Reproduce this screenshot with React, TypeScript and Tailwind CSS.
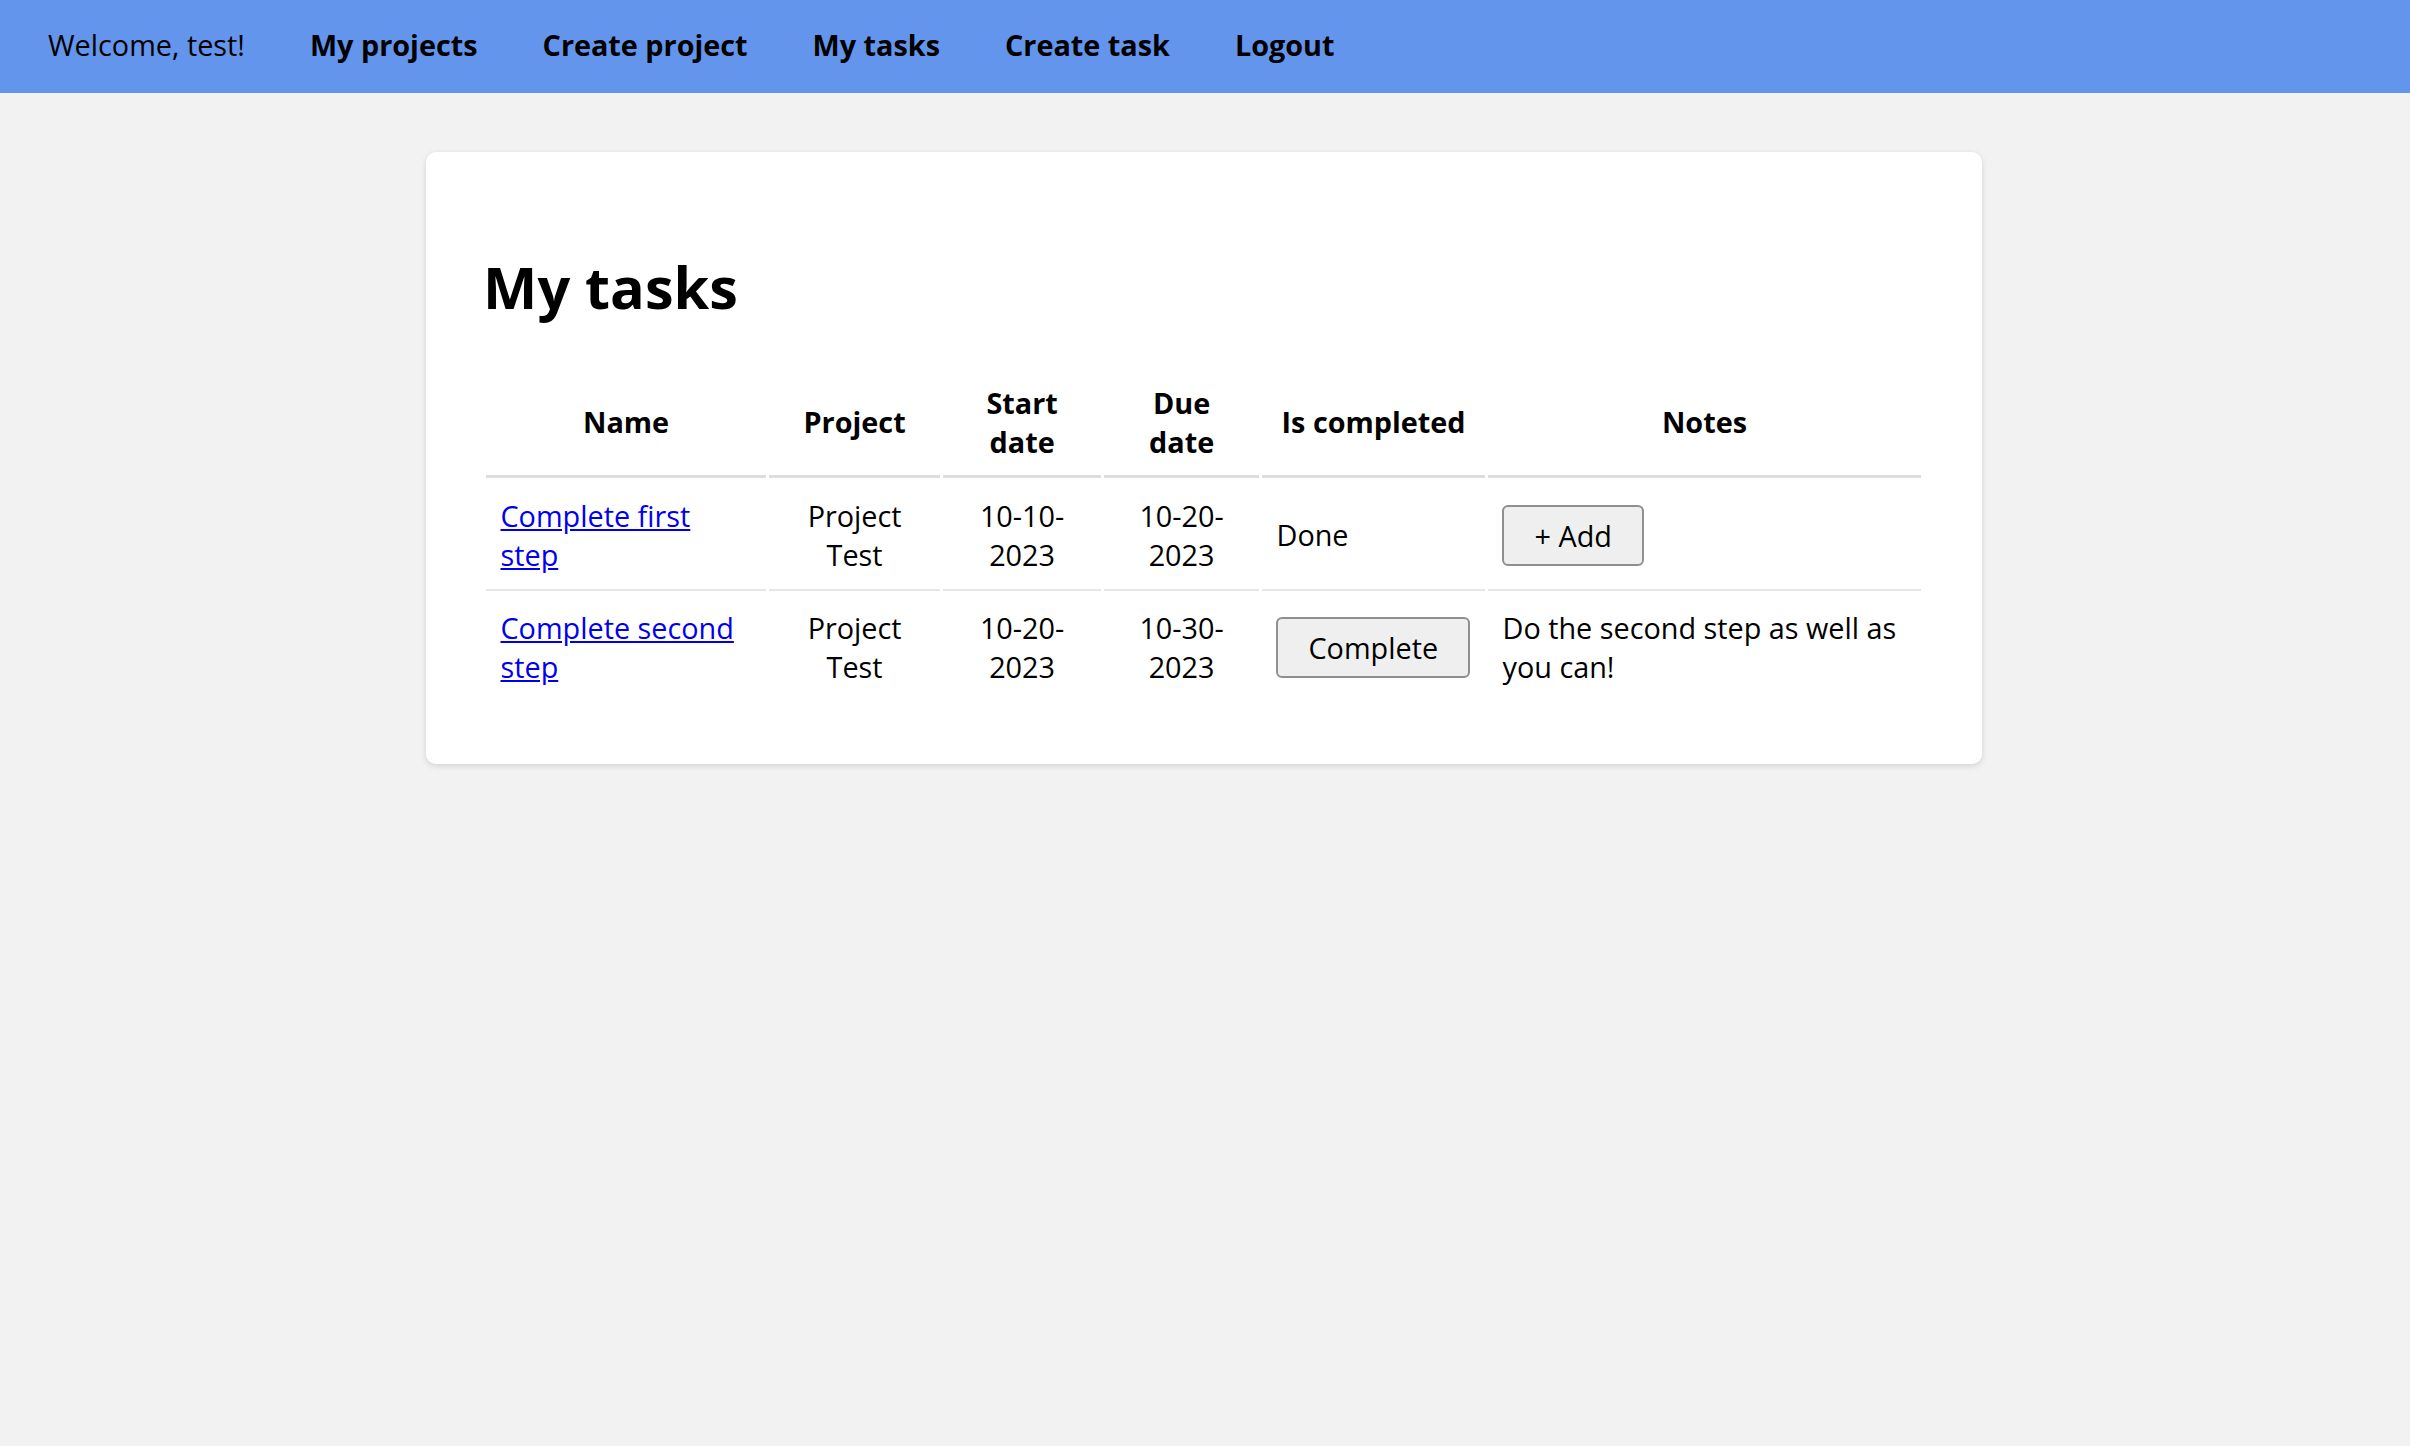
import React from 'react';

type Task = {
  name: string;
  project: string;
  start: string;
  due: string;
  done: boolean;
  notes: string;
};

const tasks: Task[] = [
  { name: 'Complete first step', project: 'Project Test', start: '10-10-2023', due: '10-20-2023', done: true, notes: '' },
  { name: 'Complete second step', project: 'Project Test', start: '10-20-2023', due: '10-30-2023', done: false, notes: 'Do the second step as well as you can!' },
];

const navLinks = ['My projects', 'Create project', 'My tasks', 'Create task', 'Logout'];

function NavBar() {
  return (
    <nav className="h-[93px] bg-[#6495ed] flex items-center gap-[65px] pl-[48px] pb-[3px]">
      <span>Welcome, test!</span>
      {navLinks.map((link) => (
        <a key={link} href="#" className="font-bold text-black no-underline">
          {link}
        </a>
      ))}
    </nav>
  );
}

function PlainButton({ children }: { children: React.ReactNode }) {
  return (
    <button className="bg-[#efefef] border-2 border-[#8f8f8f] rounded-[6px] px-[30px] py-[9px] leading-[39px] text-black">
      {children}
    </button>
  );
}

function TaskTable() {
  const th = 'font-bold text-center align-middle p-[14.4px] border-b-[3px] border-[#dddddd]';
  const td = 'align-middle p-[14.4px]';
  return (
    <table className="w-full table-fixed border-separate border-spacing-[3px]">
      <colgroup>
        <col className="w-[280px]" />
        <col className="w-[171px]" />
        <col className="w-[158px]" />
        <col className="w-[155px]" />
        <col className="w-[223px]" />
        <col />
      </colgroup>
      <thead>
        <tr>
          <th className={th}>Name</th>
          <th className={th}>Project</th>
          <th className={th}>Start date</th>
          <th className={th}>Due date</th>
          <th className={th}>Is completed</th>
          <th className={th}>Notes</th>
        </tr>
      </thead>
      <tbody>
        {tasks.map((task, i) => {
          const border = i < tasks.length - 1 ? ' border-b-2 border-[#e6e6e6]' : '';
          return (
            <tr key={task.name}>
              <td className={td + border}>
                <a href="#" className="text-[#0000ee] underline">
                  {task.name}
                </a>
              </td>
              <td className={td + border + ' text-center'}>{task.project}</td>
              <td className={td + border + ' text-center'}>{task.start}</td>
              <td className={td + border + ' text-center'}>{task.due}</td>
              <td className={td + border}>
                {task.done ? 'Done' : <PlainButton>Complete</PlainButton>}
              </td>
              <td className={td + border}>
                {task.notes ? task.notes : <PlainButton>+ Add</PlainButton>}
              </td>
            </tr>
          );
        })}
      </tbody>
    </table>
  );
}

export default function App() {
  return (
    <div
      className="min-h-[1446px] bg-[#f2f2f2] text-black text-[28.8px] leading-[39.2px]"
      style={{ fontFamily: '"Open Sans", "Noto Sans", sans-serif' }}
    >
      <NavBar />
      <main className="pt-[59px] pr-[3px]">
        <div className="w-[1556px] mx-auto bg-white rounded-[10px] shadow-[0_2px_6px_rgba(0,0,0,0.13)] px-[57.6px] pt-[57.6px] pb-[60px]">
          <h1 className="text-[57.6px] leading-[78.5px] font-bold my-[38.6px]">My tasks</h1>
          <TaskTable />
        </div>
      </main>
    </div>
  );
}
